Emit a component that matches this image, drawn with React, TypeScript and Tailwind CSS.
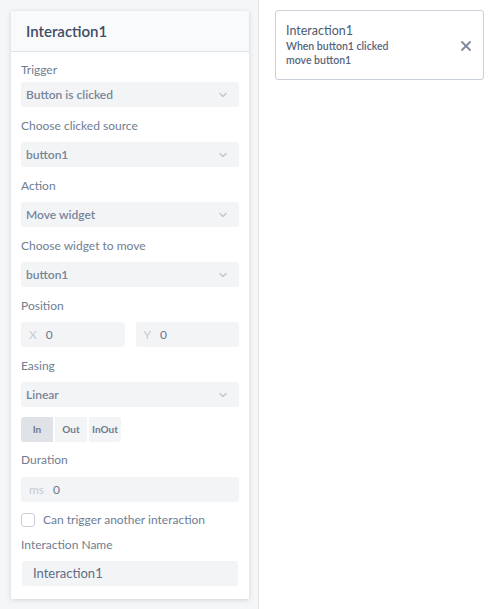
import { ChevronDown, X } from "lucide-react";

// ---- local components ------------------------------------------------------

function Label({ children, first }: { children: string; first?: boolean }) {
  return (
    <p
      className={`h-5 text-[12px] leading-5 text-[#6f7d92] ${
        first ? "mt-[8px] mb-[2px]" : "mt-[9px] mb-[6px]"
      }`}
    >
      {children}
    </p>
  );
}

function Select({ value }: { value: string }) {
  return (
    <div className="flex h-[25px] items-center justify-between rounded-[3px] bg-[#f3f4f6] pl-[5px] pr-[10px]">
      <span className="text-[12px] font-semibold text-[#76849a]">{value}</span>
      <ChevronDown size={12} strokeWidth={3} className="text-[#c3c9d2]" aria-hidden />
    </div>
  );
}

function Input({ prefix, value }: { prefix: string; value: string }) {
  return (
    <div className="flex h-[25px] flex-1 items-center gap-[9px] rounded-[3px] bg-[#f3f4f6] pl-[8px]">
      <span className="text-[12px] text-[#c6cbd3]">{prefix}</span>
      <span className="text-[12px] text-[#67768c]">{value}</span>
    </div>
  );
}

// ---- page ------------------------------------------------------------------

export default function App() {
  return (
    <div className="flex h-[609px] w-[500px] bg-white font-['Lato',sans-serif]">
      <aside className="w-[259px] shrink-0 border-r border-[#e4e8ec] bg-[#f5f6f8] pt-[11px] pl-[11px] pr-[9px]">
        <div className="h-[588px] bg-white shadow-[0_1px_5px_rgba(0,0,0,0.14)]">
          <header className="flex h-[41px] items-center border-b border-[#dfe3e8] bg-[#f9fafb] px-[15px]">
            <h1 className="text-[15px] font-semibold text-[#3e4d66]">Interaction1</h1>
          </header>

          <div className="px-[10px]">
            <Label first>Trigger</Label>
            <Select value="Button is clicked" />
            <Label>Choose clicked source</Label>
            <Select value="button1" />
            <Label>Action</Label>
            <Select value="Move widget" />
            <Label>Choose widget to move</Label>
            <Select value="button1" />
            <Label>Position</Label>
            <div className="flex gap-[11px]">
              <Input prefix="X" value="0" />
              <Input prefix="Y" value="0" />
            </div>
            <Label>Easing</Label>
            <Select value="Linear" />

            <div className="mt-[10px] flex gap-[2px]">
              <button className="h-[25px] w-[32px] rounded-l-[3px] bg-[#dfe3e8] text-[10px] font-bold text-[#6b7a90]">
                In
              </button>
              <button className="h-[25px] w-[32px] bg-[#f3f4f6] text-[10px] font-bold text-[#6b7a90]">
                Out
              </button>
              <button className="h-[25px] w-[32px] rounded-r-[3px] bg-[#f3f4f6] text-[10px] font-bold text-[#6b7a90]">
                InOut
              </button>
            </div>

            <p className="mt-[8px] mb-[7px] h-5 text-[12px] leading-5 text-[#6f7d92]">Duration</p>
            <Input prefix="ms" value="0" />

            <label className="mt-[9px] flex items-center gap-[8px]">
              <span className="size-[14px] rounded-[3px] border border-[#c9ced6] bg-white" />
              <span className="text-[12px] text-[#6f7d92]">Can trigger another interaction</span>
            </label>

            <p className="mt-[6px] mb-[6px] h-5 text-[12px] leading-5 text-[#6f7d92]">Interaction Name</p>
            <div className="mx-[1px] flex h-[25px] items-center rounded-[3px] bg-[#f3f4f6] px-[11px]">
              <span className="text-[13px] text-[#5f6e85]">Interaction1</span>
            </div>
          </div>
        </div>
      </aside>

      <main className="flex-1 pt-[10px] pl-[16px] pr-[16px]">
        <div className="flex h-[70px] items-start justify-between rounded-[3px] border border-[#c9d0d9] bg-white pt-[13px] pl-[10px] pr-[9px]">
          <div className="leading-[14px]">
            <p className="text-[12.5px] text-[#4c5b72]">Interaction1</p>
            <p className="mt-[1px] text-[10.5px] font-semibold text-[#56657c]">When button1 clicked</p>
            <p className="text-[10.5px] font-semibold text-[#56657c]">move button1</p>
          </div>
          <X size={16} strokeWidth={2.75} className="mt-[14px] text-[#7d8a9b]" aria-hidden />
        </div>
      </main>
    </div>
  );
}
